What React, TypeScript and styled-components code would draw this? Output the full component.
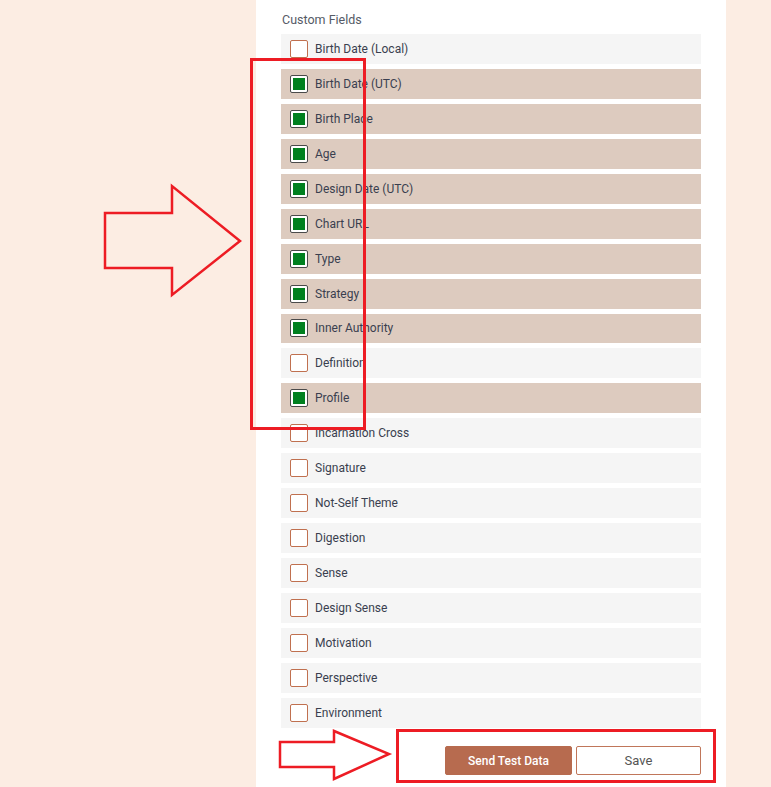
import React from "react";
import styled, { createGlobalStyle } from "styled-components";

const GlobalStyle = createGlobalStyle`
  html, body { margin: 0; padding: 0; background: #fcede3; }
  body { font-family: Roboto, "Liberation Sans", Arial, sans-serif; }
`;

const Page = styled.div`
  position: relative;
  width: 771px;
  height: 787px;
  overflow: hidden;
  display: flex;
  background: #fcede3;
`;

const Panel = styled.section`
  margin-left: 256px;
  width: 470px;
  box-sizing: border-box;
  padding: 12px 25px 0 25px;
  background: #ffffff;
  display: flex;
  flex-direction: column;
`;

const Title = styled.div`
  font-size: 12.5px;
  color: #555a66;
  line-height: 16px;
  padding-left: 1px;
  margin-bottom: 6px;
`;

const List = styled.div`
  display: flex;
  flex-direction: column;
  gap: 5px;
`;

const Row = styled.label<{ $checked: boolean }>`
  height: 29.95px;
  display: flex;
  align-items: center;
  padding-left: 9px;
  gap: 7px;
  background: ${(p) => (p.$checked ? "#ddcbbf" : "#f5f5f5")};
  font-size: 12px;
  color: #3a3f4f;
`;

const Box = styled.span<{ $checked: boolean }>`
  width: 18px;
  height: 18px;
  box-sizing: border-box;
  border: 1px solid ${(p) => (p.$checked ? "#4a4a4a" : "#c0704f")};
  border-radius: 2px;
  background: #fff;
  padding: 2px;
  display: flex;
  &::after {
    content: "";
    flex: 1;
    background: ${(p) => (p.$checked ? "#00801f" : "transparent")};
  }
`;

const Actions = styled.div`
  display: flex;
  justify-content: flex-end;
  gap: 4px;
  margin-top: 18px;
`;

const Button = styled.button<{ $primary?: boolean }>`
  height: 29px;
  box-sizing: border-box;
  border-radius: 2px;
  font-family: Roboto, "Liberation Sans", Arial, sans-serif;
  font-size: ${(p) => (p.$primary ? "12px" : "13px")};
  font-weight: ${(p) => (p.$primary ? 500 : 400)};
  width: ${(p) => (p.$primary ? "127px" : "125px")};
  padding: ${(p) => (p.$primary ? "2px 0 0" : "0")};
  background: ${(p) => (p.$primary ? "#b76b4f" : "#ffffff")};
  color: ${(p) => (p.$primary ? "#ffffff" : "#555")};
  border: 1px solid ${(p) => (p.$primary ? "#b76b4f" : "#c0765a")};
  cursor: pointer;
`;

const Overlay = styled.svg`
  position: absolute;
  left: 0;
  top: 0;
  pointer-events: none;
`;

const fields: [string, boolean][] = [
  ["Birth Date (Local)", false],
  ["Birth Date (UTC)", true],
  ["Birth Place", true],
  ["Age", true],
  ["Design Date (UTC)", true],
  ["Chart URL", true],
  ["Type", true],
  ["Strategy", true],
  ["Inner Authority", true],
  ["Definition", false],
  ["Profile", true],
  ["Incarnation Cross", false],
  ["Signature", false],
  ["Not-Self Theme", false],
  ["Digestion", false],
  ["Sense", false],
  ["Design Sense", false],
  ["Motivation", false],
  ["Perspective", false],
  ["Environment", false],
];

export default function App() {
  return (
    <>
      <GlobalStyle />
      <Page>
        <Panel>
          <Title>Custom Fields</Title>
          <List>
            {fields.map(([name, checked]) => (
              <Row key={name} $checked={checked}>
                <Box $checked={checked} />
                <span>{name}</span>
              </Row>
            ))}
          </List>
          <Actions>
            <Button $primary>Send Test Data</Button>
            <Button>Save</Button>
          </Actions>
        </Panel>
        <Overlay width="771" height="787" viewBox="0 0 771 787">
          <g fill="none" stroke="#ed1c24" strokeWidth="3">
            <rect x="251.5" y="59.5" width="113" height="369" />
            <polygon points="105,213 172,213 172,186 240,241 172,295 172,268 105,268" strokeWidth="2.5" />
            <polygon points="280,742 334,742 334,731 389,754 334,779 334,767 280,767" strokeWidth="2.5" />
            <rect x="397.5" y="730.5" width="317" height="51" />
          </g>
        </Overlay>
      </Page>
    </>
  );
}
